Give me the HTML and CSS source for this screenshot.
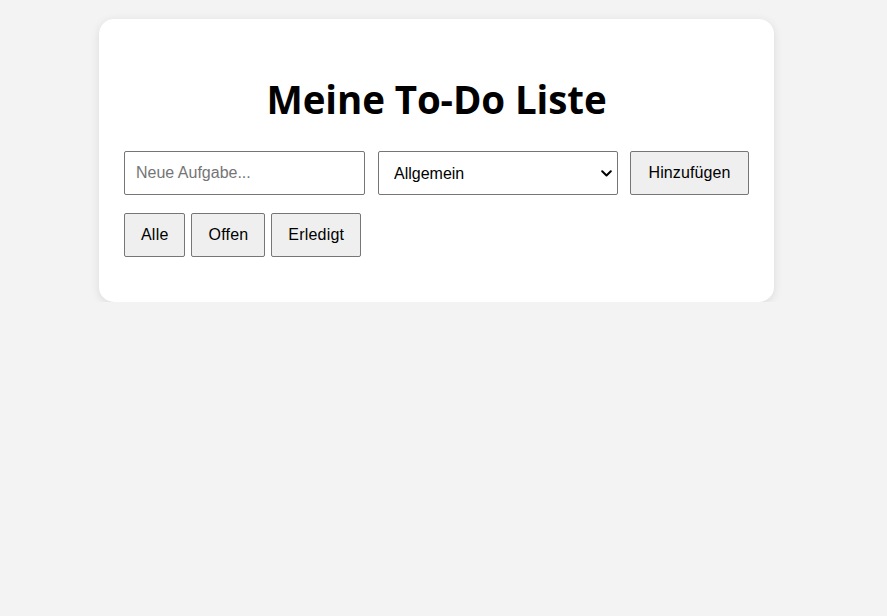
FILE: index.html
```html
<!DOCTYPE html>
<html lang="de">
<head>
<meta charset="utf-8">
<title>Meine To-Do Liste</title>
<link rel="stylesheet" href="styles.css">
</head>
<body>
<main class="card">
  <h1 class="title">Meine To-Do Liste</h1>
  <div class="add-row">
    <input class="task-input" type="text" placeholder="Neue Aufgabe...">
    <div class="select-wrap">
      <select class="category">
        <option>Allgemein</option>
        <option>Arbeit</option>
        <option>Privat</option>
      </select>
      <svg class="chevron" width="11" height="7" viewBox="0 0 11 7" aria-hidden="true">
        <path d="M1.2 1.2 L5.5 5.5 L9.8 1.2" fill="none" stroke="#000" stroke-width="2" stroke-linecap="round" stroke-linejoin="round"/>
      </svg>
    </div>
    <button class="btn btn-add">Hinzufügen</button>
  </div>
  <div class="filters">
    <button class="btn">Alle</button>
    <button class="btn">Offen</button>
    <button class="btn">Erledigt</button>
  </div>
</main>
</body>
</html>
```
FILE: styles.css
```css
html, body {
  margin: 0;
  padding: 0;
  background: #f3f3f3;
  font-family: "Liberation Sans", Arial, sans-serif;
}

.card {
  box-sizing: border-box;
  width: 675px;
  margin: 19px 0 0 99px;
  padding: 25px 25px 45px;
  background: #fff;
  border-radius: 15px;
  box-shadow: 0 2px 10px rgba(0, 0, 0, 0.1);
}

.title {
  margin: 28px 0 25px;
  font-family: "Open Sans", "Noto Sans", sans-serif;
  font-size: 38.5px;
  line-height: 54px;
  font-weight: 700;
  letter-spacing: -0.1px;
  text-align: center;
  color: #000;
}

.add-row {
  display: flex;
  gap: 12px;
}

.task-input,
.category,
.btn {
  box-sizing: border-box;
  height: 44px;
  font-family: "Liberation Sans", Arial, sans-serif;
  font-size: 16px;
  color: #000;
  border: 1px solid #767676;
  margin: 0;
}

.task-input {
  width: 241px;
  margin-right: 1px;
  padding: 0 11px;
  border-radius: 2px;
  background: #fff;
  outline: none;
}

.task-input::placeholder {
  color: #757575;
}

.select-wrap {
  position: relative;
  width: 240px;
  height: 44px;
}

.category {
  display: block;
  width: 100%;
  padding: 0 28px 0 15px;
  border-radius: 2px;
  background-color: #fff;
  -webkit-appearance: none;
  -moz-appearance: none;
  appearance: none;
}

.chevron {
  position: absolute;
  right: 6px;
  top: 19px;
  pointer-events: none;
}

.btn {
  padding: 0 16px;
  background: #efefef;
  border-radius: 2px;
  letter-spacing: 0.2px;
  cursor: pointer;
}

.btn-add {
  width: 119px;
  padding: 0 15px;
  letter-spacing: 0.1px;
}

.filters {
  display: flex;
  gap: 6px;
  margin-top: 18px;
}
```
